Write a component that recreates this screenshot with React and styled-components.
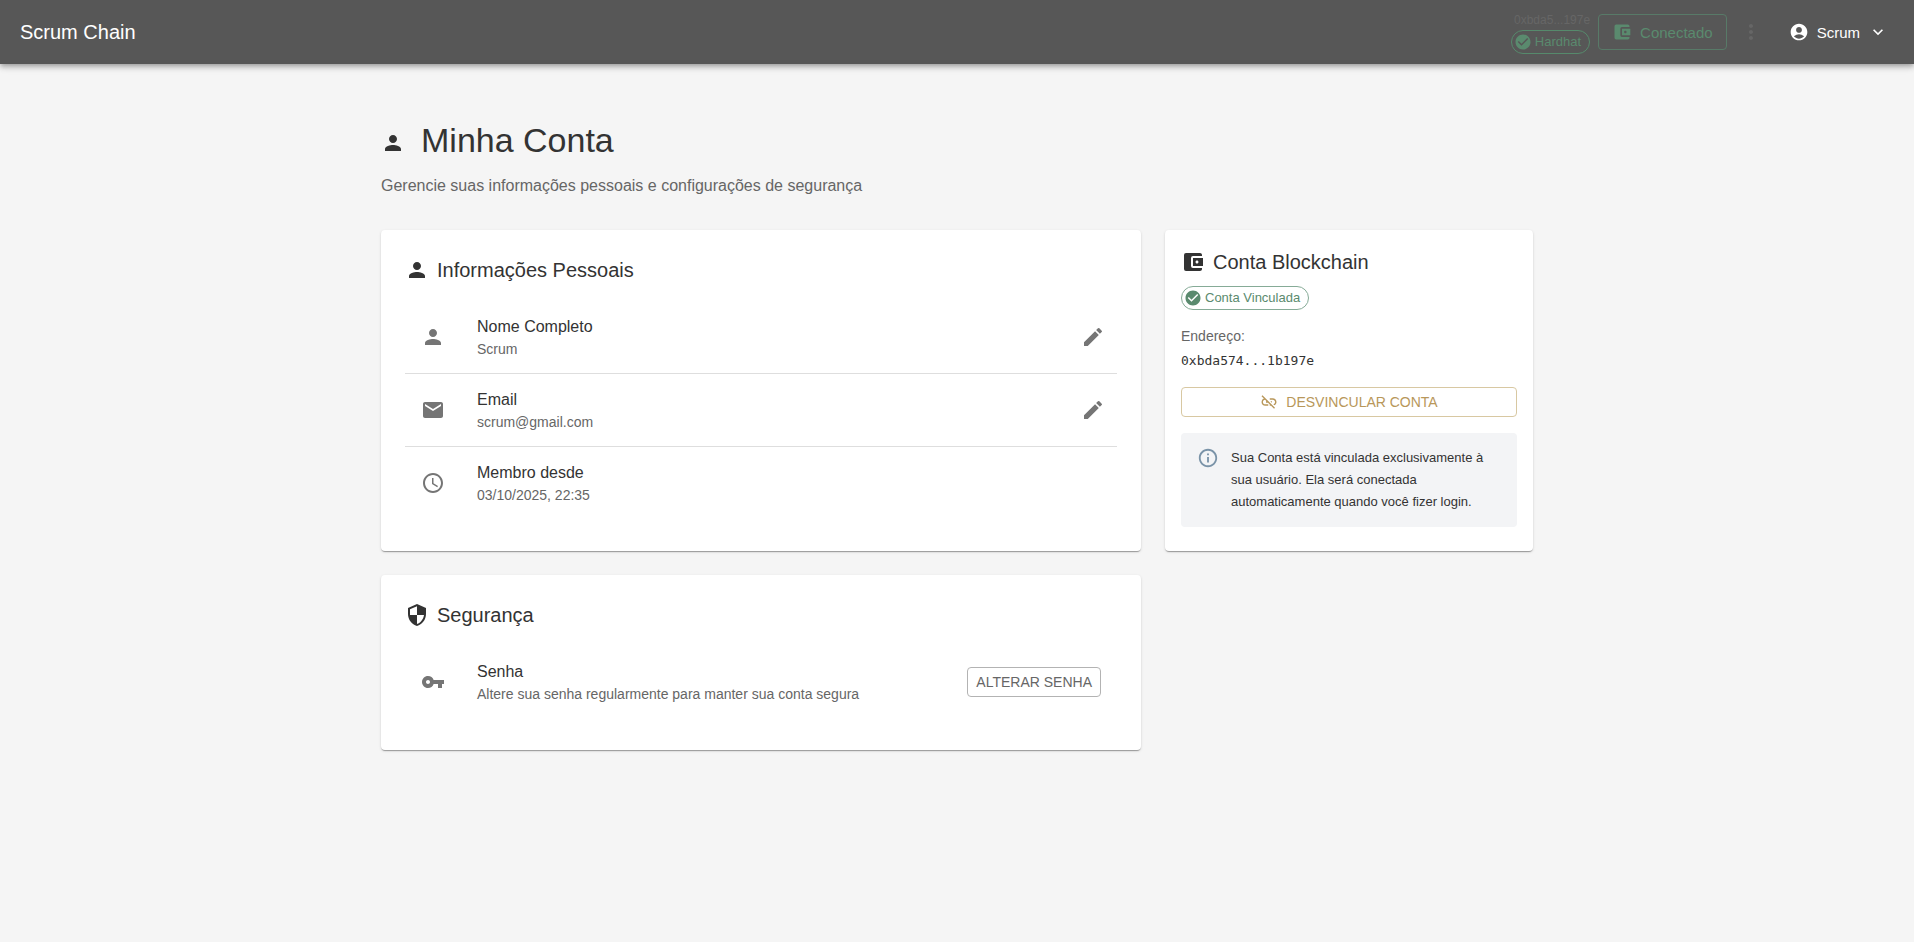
import React from "react";
import styled, { createGlobalStyle } from "styled-components";
import {
  MdAccessTime,
  MdAccountBalanceWallet,
  MdAccountCircle,
  MdCheckCircle,
  MdEdit,
  MdEmail,
  MdExpandMore,
  MdInfoOutline,
  MdLinkOff,
  MdMoreVert,
  MdPerson,
  MdSecurity,
  MdVpnKey,
} from "react-icons/md";

const GlobalStyle = createGlobalStyle`
  *, *::before, *::after { box-sizing: border-box; }
  body {
    margin: 0;
    background: #f5f5f5;
    color: #333;
    font-family: "Liberation Sans", Arial, sans-serif;
    font-size: 16px;
    line-height: 24px;
  }
  h1, h2, p, ul { margin: 0; padding: 0; font-weight: 400; }
  button { font-family: inherit; cursor: pointer; }
  svg { flex-shrink: 0; }
`;

const TopBar = styled.header`
  position: relative;
  display: flex;
  align-items: center;
  justify-content: space-between;
  height: 64px;
  padding: 0 12px 0 20px;
  background: #575757;
  color: #fff;
  box-shadow: 0 2px 4px -1px rgba(0, 0, 0, 0.2), 0 4px 5px rgba(0, 0, 0, 0.14),
    0 1px 10px rgba(0, 0, 0, 0.12);
`;

const Brand = styled.a`
  color: inherit;
  font-size: 20px;
  line-height: 32px;
  text-decoration: none;
`;

const BarActions = styled.div`
  display: flex;
  align-items: center;
`;

const Wallet = styled.div`
  display: flex;
  flex-direction: column;
  align-items: flex-end;
  margin-right: 8px;
`;

const WalletAddress = styled.span`
  color: #666;
  font-size: 12px;
  line-height: 20px;
`;

const Chip = styled.span`
  display: inline-flex;
  align-items: center;
  gap: 3px;
  height: 24px;
  padding: 0 8px 0 2px;
  border: 1px solid ${(p) => (p.$dark ? "#568a6c" : "#86ab97")};
  border-radius: 12px;
  color: #5a8a6e;
  font-size: 13px;
  line-height: 20px;
`;

const BarButton = styled.button`
  display: flex;
  align-items: center;
  gap: 8px;
  height: 36px;
  padding: 0 13px;
  border: 1px solid ${(p) => (p.$outlined ? "#587a68" : "transparent")};
  border-radius: 4px;
  background: transparent;
  color: ${(p) => (p.$outlined ? "#5a8a6e" : "#fff")};
  font-size: 15px;
`;

const BarIconButton = styled.button`
  display: flex;
  padding: 8px;
  margin: 0 4px;
  border: 0;
  background: transparent;
  color: #666;
`;

const Page = styled.main`
  max-width: 1200px;
  margin: 0 auto;
  padding: 56px 24px 32px;
`;

const PageTitle = styled.h1`
  font-size: 34px;
  line-height: 40px;

  svg {
    margin-right: 16px;
    vertical-align: middle;
  }
`;

const PageLead = styled.p`
  margin: 14px 0 32px;
  color: #666;
`;

const Cards = styled.div`
  display: grid;
  grid-template-columns: repeat(12, 1fr);
  gap: 24px;
`;

const Card = styled.section`
  grid-column: span ${(p) => p.$span};
  padding: ${(p) => (p.$compact ? "16px" : "24px")};
  border-radius: 4px;
  background: #fff;
  box-shadow: 0 2px 1px -1px rgba(0, 0, 0, 0.2), 0 1px 1px rgba(0, 0, 0, 0.14),
    0 1px 3px rgba(0, 0, 0, 0.12);
`;

const CardTitle = styled.h2`
  display: flex;
  align-items: center;
  gap: 8px;
  font-size: 20px;
  line-height: 32px;
`;

const List = styled.ul`
  margin-top: 15px;
  padding-bottom: 8px;
  list-style: none;
`;

const Row = styled.li`
  display: flex;
  align-items: center;
  gap: 32px;
  padding: 14px 16px;

  & + & {
    border-top: 1px solid #dedede;
  }

  > svg {
    color: #757575;
  }
`;

const RowText = styled.div`
  flex: 1;
`;

const RowLabel = styled.p`
  line-height: 24px;
`;

const Muted = styled.p`
  color: #666;
  font-size: 14px;
  line-height: 20px;
`;

const EditButton = styled.button`
  display: flex;
  padding: 8px;
  margin-right: -12px;
  border: 0;
  background: transparent;
  color: #757575;
`;

const OutlineButton = styled.button`
  display: flex;
  align-items: center;
  justify-content: center;
  gap: 8px;
  width: ${(p) => (p.$wide ? "100%" : "auto")};
  height: 30px;
  padding: 0 8px;
  border: 1px solid ${(p) => (p.$wide ? "#d8c8a2" : "#b3b3b3")};
  border-radius: 4px;
  background: transparent;
  color: ${(p) => (p.$wide ? "#b8975a" : "#666")};
  font-size: 14px;
  text-transform: uppercase;
`;

const Account = styled.div`
  display: flex;
  flex-direction: column;
  align-items: flex-start;
  padding-top: 8px;
`;

const Address = styled.code`
  margin: 4px 0 16px;
  font-family: "DejaVu Sans Mono", monospace;
  font-size: 13px;
  line-height: 21px;
`;

const Field = styled.div`
  display: flex;
  flex-direction: column;
  margin-top: 16px;
`;

const Notice = styled.div`
  display: flex;
  gap: 12px;
  margin-top: 16px;
  padding: 14px 16px;
  border-radius: 4px;
  background: #f3f4f6;

  svg {
    color: #7a93a8;
  }
`;

const NoticeText = styled.p`
  font-size: 13px;
  line-height: 22px;
`;

function InfoRow({ icon: Icon, label, value, children }) {
  return (
    <Row>
      <Icon size={24} aria-hidden="true" />
      <RowText>
        <RowLabel>{label}</RowLabel>
        <Muted>{value}</Muted>
      </RowText>
      {children}
    </Row>
  );
}

function Edit({ label }) {
  return (
    <EditButton type="button" aria-label={label}>
      <MdEdit size={24} />
    </EditButton>
  );
}

export default function App() {
  return (
    <>
      <GlobalStyle />
      <TopBar>
        <Brand href="#">Scrum Chain</Brand>
        <BarActions>
          <Wallet>
            <WalletAddress>0xbda5...197e</WalletAddress>
            <Chip $dark>
              <MdCheckCircle size={18} />
              Hardhat
            </Chip>
          </Wallet>
          <BarButton type="button" $outlined>
            <MdAccountBalanceWallet size={20} />
            Conectado
          </BarButton>
          <BarIconButton type="button" aria-label="Mais opções">
            <MdMoreVert size={24} />
          </BarIconButton>
          <BarButton type="button">
            <MdAccountCircle size={20} />
            Scrum
            <MdExpandMore size={20} />
          </BarButton>
        </BarActions>
      </TopBar>
      <Page>
        <PageTitle>
          <MdPerson size={24} />
          Minha Conta
        </PageTitle>
        <PageLead>Gerencie suas informações pessoais e configurações de segurança</PageLead>
        <Cards>
          <Card $span={8}>
            <CardTitle>
              <MdPerson size={24} />
              Informações Pessoais
            </CardTitle>
            <List>
              <InfoRow icon={MdPerson} label="Nome Completo" value="Scrum">
                <Edit label="Editar nome" />
              </InfoRow>
              <InfoRow icon={MdEmail} label="Email" value="scrum@gmail.com">
                <Edit label="Editar email" />
              </InfoRow>
              <InfoRow icon={MdAccessTime} label="Membro desde" value="03/10/2025, 22:35" />
            </List>
          </Card>
          <Card $span={4} $compact>
            <CardTitle>
              <MdAccountBalanceWallet size={24} />
              Conta Blockchain
            </CardTitle>
            <Account>
              <Chip>
                <MdCheckCircle size={18} />
                Conta Vinculada
              </Chip>
              <Field>
                <Muted>Endereço:</Muted>
                <Address>0xbda574...1b197e</Address>
              </Field>
              <OutlineButton type="button" $wide>
                <MdLinkOff size={18} />
                Desvincular conta
              </OutlineButton>
              <Notice>
                <MdInfoOutline size={22} />
                <NoticeText>
                  Sua Conta está vinculada exclusivamente à sua usuário. Ela será conectada
                  automaticamente quando você fizer login.
                </NoticeText>
              </Notice>
            </Account>
          </Card>
          <Card $span={8}>
            <CardTitle>
              <MdSecurity size={24} />
              Segurança
            </CardTitle>
            <List>
              <InfoRow
                icon={MdVpnKey}
                label="Senha"
                value="Altere sua senha regularmente para manter sua conta segura"
              >
                <OutlineButton type="button">Alterar senha</OutlineButton>
              </InfoRow>
            </List>
          </Card>
        </Cards>
      </Page>
    </>
  );
}
